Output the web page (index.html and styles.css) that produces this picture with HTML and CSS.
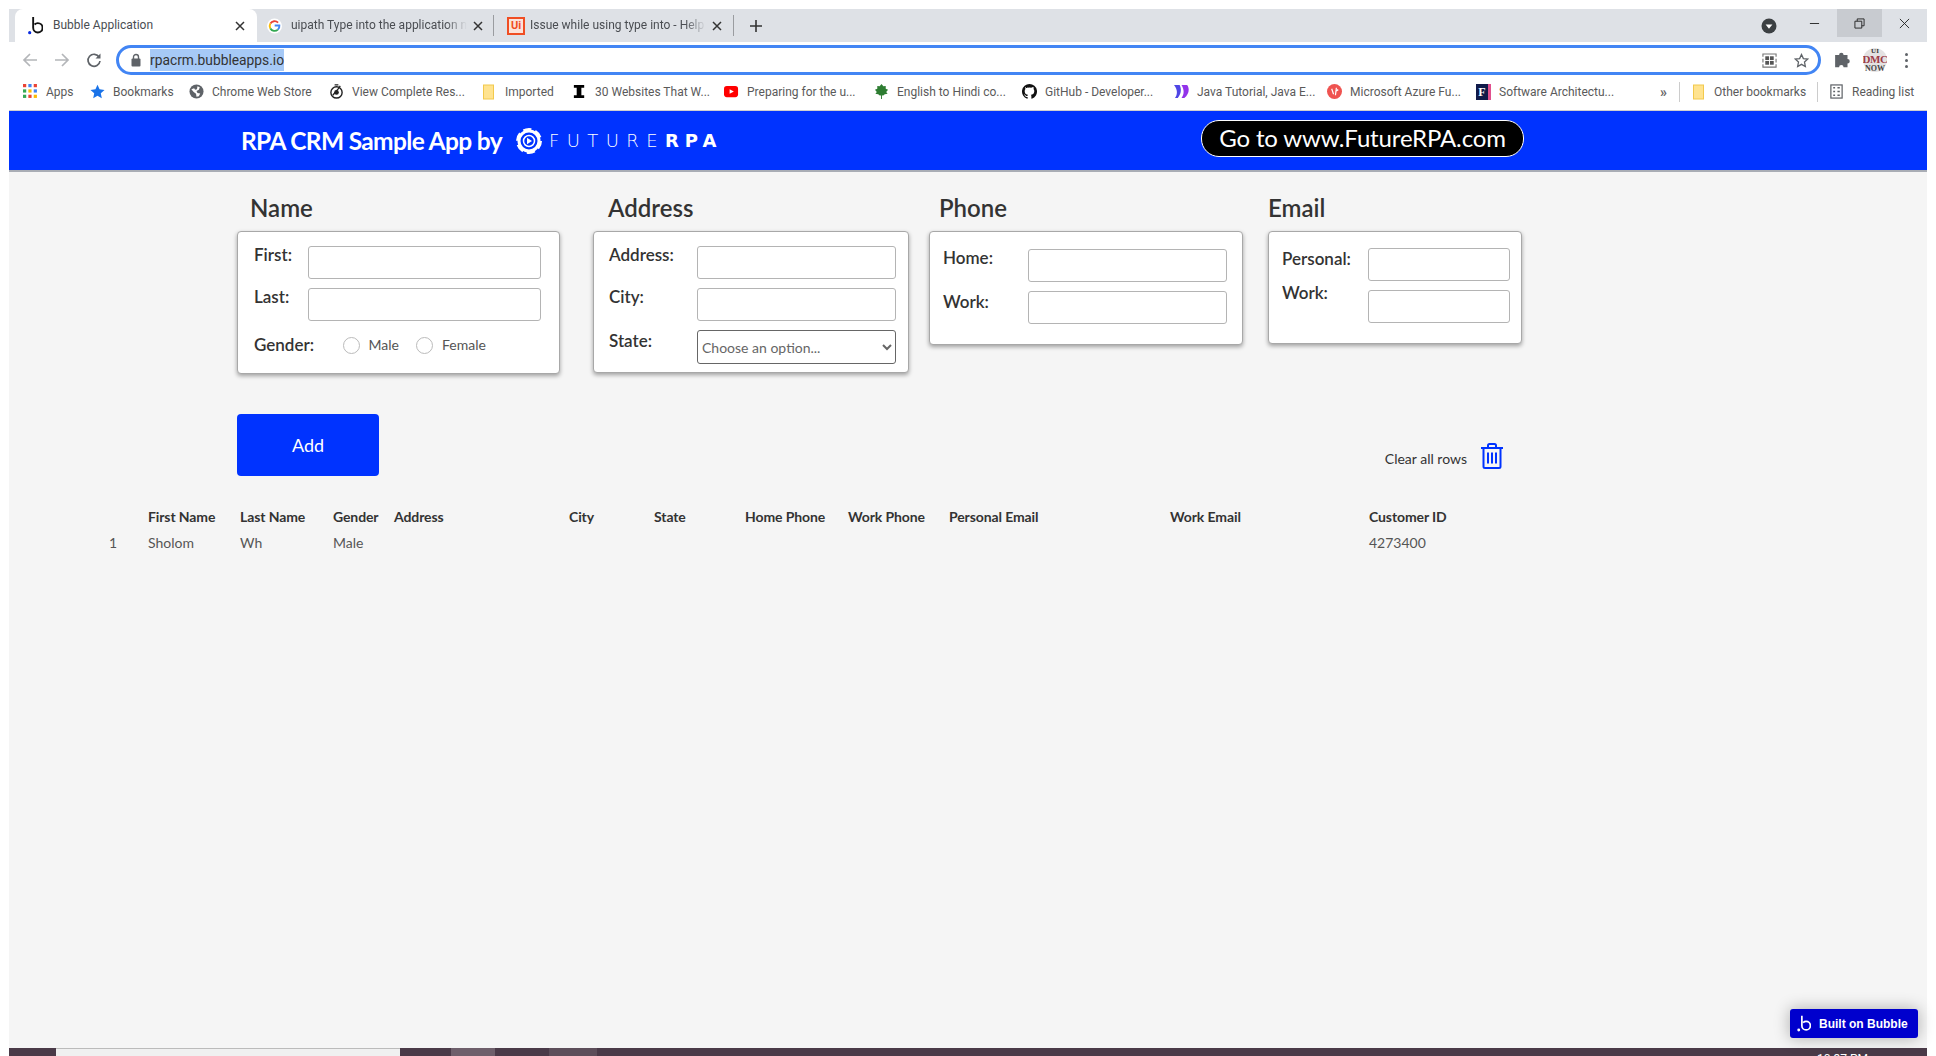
FILE: index.html
```html
<!DOCTYPE html>
<html lang="en">
<head>
  <meta charset="UTF-8" />
  <title>Bubble Application</title>
  <link rel="stylesheet" href="styles.css">
</head>
<body>
<div class="window">
  <div class="tabstrip">
    <div class="tab tab-active">
      <svg class="tab-icon" viewBox="0 0 16 20"><circle cx="1.8" cy="17.6" r="1.7" fill="#0a2be0"/><path d="M5.5 1v11.5a5 5 0 1 0 5-5 5 5 0 0 0-3.5 1.4" fill="none" stroke="#111" stroke-width="2"/></svg>
      <span class="tab-title">Bubble Application</span>
      <svg class="tab-close" viewBox="0 0 10 10"><path d="M1 1l8 8M9 1l-8 8"/></svg>
    </div>
    <div class="tab tab-google">
      <svg class="tab-icon" viewBox="0 0 16 16"><circle cx="8" cy="8" r="8" fill="#fff"/><path d="M11.8 4.4A5.2 5.2 0 0 0 3.6 5.4" fill="none" stroke="#ea4335" stroke-width="2"/><path d="M3.6 5.4a5.2 5.2 0 0 0 0 5.2" fill="none" stroke="#fbbc05" stroke-width="2"/><path d="M3.6 10.6a5.2 5.2 0 0 0 8 1.3" fill="none" stroke="#34a853" stroke-width="2"/><path d="M11.6 11.9A5.2 5.2 0 0 0 13.2 7.4H8.2" fill="none" stroke="#4285f4" stroke-width="2"/></svg>
      <span class="tab-title tab-fade">uipath Type into the application not working</span>
      <svg class="tab-close" viewBox="0 0 10 10"><path d="M1 1l8 8M9 1l-8 8"/></svg>
    </div>
    <div class="tab tab-uipath">
      <span class="ui-icon">Ui</span>
      <span class="tab-title tab-fade">Issue while using type into - Help - UiPath</span>
      <svg class="tab-close" viewBox="0 0 10 10"><path d="M1 1l8 8M9 1l-8 8"/></svg>
    </div>
    <svg class="new-tab" viewBox="0 0 12 12"><path d="M6 0v12M0 6h12"/></svg>
    <div class="strip-space"></div>
    <div class="profile-dot"><svg viewBox="0 0 16 16"><circle cx="8" cy="8" r="7.5" fill="#3c4043"/><path d="M4.6 6.4h6.8L8 10.8z" fill="#fff"/></svg></div>
    <div class="win-btn"><svg viewBox="0 0 12 12"><path d="M1 6h10"/></svg></div>
    <div class="win-btn win-restore"><svg viewBox="0 0 12 12"><path d="M1 3.5h7.5V11H1zM3.5 3.5V1H11v7.5H8.5"/></svg></div>
    <div class="win-btn"><svg viewBox="0 0 12 12"><path d="M1 1l10 10M11 1L1 11"/></svg></div>
  </div>

  <div class="toolbar">
    <div class="tool-btn"><svg viewBox="0 0 16 16"><path class="off" d="M15 8H2M8 2L2 8l6 6"/></svg></div>
    <div class="tool-btn"><svg viewBox="0 0 16 16"><path class="off" d="M1 8h13M8 2l6 6-6 6"/></svg></div>
    <div class="tool-btn"><svg viewBox="0 0 16 16"><path class="on" d="M13.2 5.2A6 6 0 1 0 14 9"/><path d="M14.5 1.5v5h-5z" fill="#5f6368"/></svg></div>
    <div class="omnibox">
      <svg class="lock" viewBox="0 0 10 14"><path d="M2.5 6V4a2.5 2.5 0 0 1 5 0v2" fill="none" stroke="#5f6368" stroke-width="1.4"/><rect x="0.5" y="5.5" width="9" height="8" rx="1" fill="#5f6368"/></svg>
      <span class="url">rpacrm.bubbleapps.io</span>
      <div class="omni-space"></div>
      <svg class="omni-icon" viewBox="0 0 16 16"><path d="M1 4V1h14v3M1 12v3h14v-3M1 6v4M15 6v4" fill="none" stroke="#777" stroke-width="1.2"/><rect x="3.5" y="3.5" width="4" height="4" fill="#555"/><rect x="8.5" y="3.5" width="4" height="4" fill="#555"/><rect x="3.5" y="8.5" width="4" height="4" fill="#555"/><rect x="8.5" y="8.5" width="4" height="4" fill="#555"/></svg>
      <svg class="omni-icon omni-star" viewBox="0 0 16 16"><path d="M8 1.6l2 4.3 4.7.6-3.5 3.2.9 4.7L8 12.1l-4.1 2.3.9-4.7L1.300 6.500l4.700-.6z" fill="none" stroke="#5f6368" stroke-width="1.4"/></svg>
    </div>
    <div class="tool-btn ext"><svg class="puzzle" viewBox="0 0 16 16"><path d="M1 5h3.500a2 2 0 1 1 4 0H12v3.500a2 2 0 1 1 0 4V16H8.500a2 2 0 1 0-4 0H1z" transform="translate(0 -1.500)" fill="#5f6368"/></svg></div>
    <div class="tool-btn ext"><svg class="avatar" viewBox="0 0 24 24"><circle cx="12" cy="12" r="12" fill="#e4e2e2"/><text x="12" y="5" class="av-top">UI</text><text x="12" y="15" class="av-mid">DMC</text><text x="12" y="22.500" class="av-low">NOW</text></svg></div>
    <div class="tool-btn kebab"><span></span><span></span><span></span></div>
  </div>

  <div class="bookmarks">
    <div class="bm"><span class="bm-icon"><svg viewBox="0 0 14 14"><rect width="3" height="3" x="0" y="0" fill="#ea4335"/><rect width="3" height="3" x="5" y="0" fill="#4285f4"/><rect width="3" height="3" x="10" y="0" fill="#ea4335"/><rect width="3" height="3" x="0" y="5" fill="#34a853"/><rect width="3" height="3" x="5" y="5" fill="#fbbc05"/><rect width="3" height="3" x="10" y="5" fill="#4285f4"/><rect width="3" height="3" x="0" y="10" fill="#34a853"/><rect width="3" height="3" x="5" y="10" fill="#ea4335"/><rect width="3" height="3" x="10" y="10" fill="#fbbc05"/></svg></span>Apps</div>
    <div class="bm"><span class="bm-icon"><svg viewBox="0 0 16 16"><path d="M8 .8l2.200 4.900 5.300.6-4 3.600 1.100 5.300L8 12.500l-4.600 2.700 1.100-5.300-4-3.600 5.300-.6z" fill="#1a73e8"/></svg></span>Bookmarks</div>
    <div class="bm"><span class="bm-icon"><svg viewBox="0 0 16 16"><circle cx="8" cy="8" r="7.500" fill="#5f6368"/><path d="M2.500 5.500l3-1 1 1.500 2-.5.500-3 2.500 1-1 2.500-2.500 1.500 1 2 3 .5-1.500 3-2.500.5-.5-3-2.500-2z" fill="#fff"/></svg></span>Chrome Web Store</div>
    <div class="bm"><span class="bm-icon"><svg viewBox="0 0 16 16"><circle cx="8" cy="9" r="6" fill="none" stroke="#222" stroke-width="1.500"/><path d="M4 12l6-7 2-3M6 1h4" stroke="#222" stroke-width="1.400" fill="none"/><circle cx="8" cy="9" r="2.500" fill="#222"/></svg></span>View Complete Res...</div>
    <div class="bm"><span class="bm-icon"><svg viewBox="0 0 14 16" class="folder"><rect x="1" y="1" width="10" height="14" fill="#ffe38f" stroke="#f2c94c"/></svg></span>Imported</div>
    <div class="bm"><span class="bm-icon"><svg viewBox="0 0 14 16"><path d="M1 1h11v3H9v8h3v3H1v-3h3V4H1z" fill="#000"/></svg></span>30 Websites That W...</div>
    <div class="bm"><span class="bm-icon"><svg viewBox="0 0 16 16"><rect y="2" width="15" height="12" rx="3" fill="#f00"/><path d="M6 5.500v5l4.500-2.500z" fill="#fff"/></svg></span>Preparing for the u...</div>
    <div class="bm"><span class="bm-icon"><svg viewBox="0 0 16 16"><path d="M8 0l2 2.500 2.500-.5v3l2.500 1-2 2.500 1.500 2-3 .5-2 1.500-1.500-1-1.500 1-2-1.500-3-.5L3 8.500 1 6l2.500-1V2L6 2.500z" fill="#2e7d32"/><path d="M7.500 10h1v6h-1z" fill="#2e7d32"/></svg></span>English to Hindi co...</div>
    <div class="bm"><span class="bm-icon"><svg viewBox="0 0 16 16"><path d="M8 0a8 8 0 0 0-2.500 15.600c.4.100.5-.2.500-.4v-1.400c-2.200.5-2.700-1-2.700-1-.4-.9-.9-1.200-.9-1.200-.7-.5.100-.5.100-.5.800.1 1.200.8 1.200.8.700 1.200 1.900.9 2.300.7.100-.5.300-.9.500-1.100-1.800-.2-3.600-.9-3.600-4 0-.9.300-1.600.8-2.100-.1-.2-.4-1 .1-2.100 0 0 .7-.2 2.200.8a7.500 7.500 0 0 1 4 0c1.500-1 2.200-.8 2.200-.8.400 1.100.2 1.900.1 2.100.5.600.8 1.300.8 2.100 0 3.100-1.900 3.800-3.700 4 .3.300.6.800.6 1.500v2.200c0 .2.100.5.500.4A8 8 0 0 0 8 0z" fill="#111"/></svg></span>GitHub - Developer...</div>
    <div class="bm"><span class="bm-icon"><svg viewBox="0 0 16 16"><path d="M0 1h6c2 4 2 9-2 14H1c3-4 3-9-1-14z" fill="#4f46e5"/><path d="M8 1h6c3 4 2 10-3 14H8c3-4 3-9 0-14z" fill="#9333ea"/></svg></span>Java Tutorial, Java E...</div>
    <div class="bm"><span class="bm-icon"><svg viewBox="0 0 16 16"><circle cx="8" cy="8" r="8" fill="#ef5350"/><path d="M5 5l2 6M10 4l-1 8M12 6l-3 2" stroke="#fff" stroke-width="1.300" fill="none"/></svg></span>Microsoft Azure Fu...</div>
    <div class="bm"><span class="bm-icon"><span class="f-icon">F</span></span>Software Architectu...</div>
    <div class="bm bm-more">»</div>
    <div class="bm-sep"></div>
    <div class="bm"><span class="bm-icon bm-icon-tight"><svg viewBox="0 0 14 16" class="folder"><rect x="1" y="1" width="10" height="14" fill="#ffe38f" stroke="#f2c94c"/></svg></span>Other bookmarks</div>
    <div class="bm-sep"></div>
    <div class="bm"><span class="bm-icon"><svg viewBox="0 0 14 16"><rect x="1" y="1" width="12" height="14" fill="none" stroke="#5f6368" stroke-width="1.300"/><path d="M3.500 4h2M8 4h2.500M3.500 8h2M8 8h2.500M3.500 12h2M8 12h2.500" stroke="#5f6368" stroke-width="1.500"/></svg></span>Reading list</div>
  </div>

  <header class="banner">
    <div class="brand">RPA CRM Sample App by</div>
    <div class="logo">
      <svg class="logo-mark" viewBox="0 0 26 26">
        <circle cx="13" cy="13" r="10" fill="none" stroke="#fff" stroke-width="3"/>
        <circle cx="13" cy="13" r="11.500" fill="none" stroke="#fff" stroke-width="3" stroke-dasharray="8 4.040"/>
        <circle cx="13" cy="13" r="5.500" fill="none" stroke="#fff" stroke-width="1.500"/>
        <path d="M11 9.800v6.400l5-3.200z" fill="#fff"/>
      </svg>
      <span class="logo-thin">FUTURE</span><span class="logo-bold">RPA</span>
    </div>
    <a class="go-btn">Go to www.FutureRPA.com</a>
  </header>

  <main class="page">
    <div class="form-row">
      <section class="group group-name">
        <h2 class="group-title">Name</h2>
        <div class="card">
          <label class="field-label">First:</label><input class="field" type="text">
          <label class="field-label">Last:</label><input class="field" type="text">
          <div class="gender-row">
            <span class="field-label gender-label">Gender:</span>
            <label class="radio"><input type="radio" name="gender">Male</label>
            <label class="radio"><input type="radio" name="gender">Female</label>
          </div>
        </div>
      </section>
      <section class="group group-address">
        <h2 class="group-title">Address</h2>
        <div class="card">
          <label class="field-label">Address:</label><input class="field" type="text">
          <label class="field-label">City:</label><input class="field" type="text">
          <label class="field-label state-label">State:</label>
          <select class="field select"><option>Choose an option...</option></select>
        </div>
      </section>
      <section class="group group-phone">
        <h2 class="group-title">Phone</h2>
        <div class="card">
          <label class="field-label">Home:</label><input class="field" type="text">
          <label class="field-label state-label">Work:</label><input class="field" type="text">
        </div>
      </section>
      <section class="group group-email">
        <h2 class="group-title">Email</h2>
        <div class="card">
          <label class="field-label state-label">Personal:</label><input class="field" type="text">
          <label class="field-label work-label">Work:</label><input class="field" type="text">
        </div>
      </section>
    </div>

    <div class="action-row">
      <button class="add-btn">Add</button>
      <div class="clear-rows">
        <span>Clear all rows</span>
        <svg class="trash" viewBox="0 0 24 26"><path d="M1 5h22M8 5V2.500Q8 1 9.500 1h5Q16 1 16 2.500V5M3.500 5v18.500Q3.500 25 5 25h14q1.500 0 1.500-1.500V5M8 9.500v11M12 9.500v11M16 9.500v11"/></svg>
      </div>
    </div>

    <div class="rows">
      <div class="row row-head">
        <span></span><span>First Name</span><span>Last Name</span><span>Gender</span><span>Address</span><span>City</span><span>State</span><span>Home Phone</span><span>Work Phone</span><span>Personal Email</span><span>Work Email</span><span>Customer ID</span>
      </div>
      <div class="row">
        <span>1</span><span>Sholom</span><span>Wh</span><span>Male</span><span></span><span></span><span></span><span></span><span></span><span></span><span></span><span>4273400</span>
      </div>
    </div>

    <a class="built-on">
      <svg viewBox="0 0 16 20"><circle cx="1.800" cy="17.600" r="1.700" fill="#fff"/><path d="M5.500 1v11.500a5 5 0 1 0 5-5 5 5 0 0 0-3.500 1.400" fill="none" stroke="#fff" stroke-width="2"/></svg>
      Built on Bubble
    </a>
  </main>

  <footer class="taskbar">
    <span class="task task-start"></span>
    <span class="task task-search"></span>
    <span class="task task-gap"></span>
    <span class="task task-lit"></span>
    <span class="task task-gap2"></span>
    <span class="task task-lit2"></span>
    <span class="clock">10:37 PM</span>
  </footer>
</div>
</body>
</html>
```

FILE: styles.css
```css
* { box-sizing: border-box; }
html, body { height: 100%; }
body {
  margin: 0;
  background: #fff;
  padding: 9px 9px 0;
  font-family: Lato, "Liberation Sans", sans-serif;
  overflow: hidden;
}
.window {
  height: 1047px;
  display: flex;
  flex-direction: column;
}

/* browser chrome */
.tabstrip {
  height: 33px;
  flex: none;
  background: #dee1e6;
  display: flex;
  align-items: center;
  padding-left: 6px;
  font: 12px Roboto, sans-serif;
  color: #4a4d52;
}
.tab {
  height: 33px;
  display: flex;
  align-items: center;
  position: relative;
}
.tab-active {
  width: 242px;
  background: #fff;
  border-radius: 8px 8px 0 0;
  padding: 0 12px 0 13px;
}
.tab-google { width: 237px; padding: 0 10px 0 10px; border-right: 1px solid #9a9ca0; height: 21px; }
.tab-uipath { width: 240px; padding: 0 11px 0 13px; border-right: 1px solid #9a9ca0; height: 21px; }
.tab-icon { width: 15px; height: 16px; flex: none; margin-right: 9px; }
.tab-active .tab-icon { height: 19px; margin-right: 10px; }
.tab-title { flex: 1; white-space: nowrap; overflow: hidden; min-width: 0; padding-bottom: 2px; }
.tab-fade { -webkit-mask-image: linear-gradient(to right, #000 88%, transparent 100%); margin-right: 6px; }
.tab-close { width: 10px; height: 10px; flex: none; fill: none; stroke: #333; stroke-width: 1.5; }
.ui-icon {
  width: 18px;
  height: 18px;
  flex: none;
  margin-right: 5px;
  border: 2px solid #f04e23;
  background: #fbe3da;
  color: #f04e23;
  font: 700 11px/14px Roboto, sans-serif;
  text-align: center;
}
.new-tab { width: 12px; height: 12px; margin-left: 16px; fill: none; stroke: #333; stroke-width: 1.6; flex: none; }
.strip-space { flex: 1; }
.profile-dot { width: 16px; height: 16px; margin-right: 15px; }
.profile-dot svg { display: block; width: 16px; height: 16px; }
.win-btn {
  width: 45px;
  height: 28px;
  align-self: flex-start;
  display: flex;
  align-items: center;
  justify-content: center;
}
.win-btn svg { width: 11px; height: 11px; fill: none; stroke: #222; stroke-width: 1; }
.win-restore { background: #c8cbd0; }

.toolbar {
  height: 36px;
  flex: none;
  background: #fff;
  display: flex;
  align-items: center;
  padding: 0 6px 0 5px;
}
.tool-btn { width: 32px; height: 30px; display: flex; align-items: center; justify-content: center; flex: none; }
.tool-btn svg { width: 16px; height: 16px; fill: none; stroke-width: 1.7; }
.tool-btn .off { stroke: #b4b6b9; }
.tool-btn .on { stroke: #5f6368; }
.omnibox {
  flex: 1;
  height: 30px;
  margin-left: 6px;
  border: 3px solid #4285f4;
  border-radius: 15px;
  display: flex;
  align-items: center;
  padding: 0 9px 0 12px;
}
.lock { width: 10px; height: 14px; flex: none; margin-right: 9px; }
.url {
  background: #a6c9f6;
  font: 13.800px/22px Roboto, sans-serif;
  color: #333;
}
.omni-space { flex: 1; }
.omni-icon { width: 15px; height: 15px; flex: none; }
.omni-star { margin-left: 17px; }
.omnibox + .ext { margin-left: 6px; }
.tool-btn svg.puzzle { width: 18px; height: 18px; }
.tool-btn svg.avatar { width: 24px; height: 24px; }
.avatar text { text-anchor: middle; font-family: "Liberation Serif", serif; font-weight: 700; stroke: none; }
.av-top { font-size: 7px; fill: #333; }
.av-mid { font-size: 11px; fill: #9c3b46; letter-spacing: -.5px; }
.av-low { font-size: 8px; fill: #444; }
.kebab { flex-direction: column; gap: 3px; width: 30px; }
.kebab span { width: 3px; height: 3px; border-radius: 50%; background: #5f6368; }

.bookmarks {
  height: 33px;
  flex: none;
  background: #fff;
  border-bottom: 1px solid #d0d0d0;
  display: grid;
  grid-template-columns: 67px 99px 140px 153px 90px 152px 150px 148px 152px 153px 149px 184px 19px 13px 125px 12px 1fr;
  align-items: center;
  padding: 0 0 5px 14px;
  font: 12px Roboto, sans-serif;
  color: #5a5a5a;
  white-space: nowrap;
}
.bm { display: flex; align-items: center; }
.bm-icon { width: 16px; height: 16px; margin-right: 7px; flex: none; display: flex; align-items: center; }
.bm-icon svg { width: 15px; height: 15px; display: block; }
.bm-icon .folder { height: 16px; }
.bm-icon-tight { margin-right: 6px; }
.f-icon {
  width: 15px;
  height: 16px;
  background: #101a4a;
  border-right: 3px solid #e0508e;
  color: #fff;
  font: 700 12px/16px "Liberation Serif", serif;
  text-align: center;
}
.bm-more { font-size: 14px; font-weight: 700; color: #666; }
.bm-sep { width: 1px; height: 20px; background: #ccc; }

/* app header */
.banner {
  height: 61px;
  flex: none;
  background: #0033ff;
  border-bottom: 2px solid #a9adb5;
  display: flex;
  align-items: center;
  padding-left: 232px;
  color: #fff;
}
.brand { font-size: 24.500px; font-weight: 700; letter-spacing: -.65px; width: 275px; white-space: nowrap; }
.logo { display: flex; align-items: center; width: 685px; }
.logo-mark { width: 26px; height: 26px; margin-right: 7px; }
.logo-thin { font: 200 18px "DejaVu Sans", sans-serif; letter-spacing: 7.400px; }
.logo-bold { font: 700 18px "DejaVu Sans", sans-serif; letter-spacing: 6px; }
.go-btn {
  width: 323px;
  height: 37px;
  margin-top: -4px;
  background: #000;
  border: 1px solid #fff;
  border-radius: 18px;
  font-size: 24px;
  letter-spacing: -.15px;
  line-height: 33px;
  text-align: center;
  white-space: nowrap;
}

/* form */
.page {
  flex: 1;
  background: #f5f5f5;
  position: relative;
  color: #333;
}
.form-row {
  display: flex;
  align-items: flex-start;
  padding: 21px 0 0 228px;
}
.group-title {
  margin: 0 0 8px;
  height: 30px;
  font-size: 24px;
  font-weight: 600;
  line-height: 30px;
}
.card {
  display: grid;
  row-gap: 9px;
  align-items: start;
  align-content: start;
  background: #fff;
  border: 1px solid #a8a8a8;
  border-radius: 4px;
  box-shadow: 0 2px 4px rgba(0, 0, 0, .35);
}
.group-name { width: 323px; margin-right: 33px; }
.group-address { width: 316px; margin-right: 20px; }
.group-phone { width: 314px; margin-right: 25px; }
.group-email { width: 254px; }
.group-name .group-title { padding-left: 13px; }
.group-address .group-title { padding-left: 15px; }
.group-phone .group-title { padding-left: 10px; }
.group-name .card { height: 143px; padding: 14px 0 0 16px; grid-template-columns: 54px 233px; }
.group-address .card { height: 142px; padding: 14px 0 0 15px; grid-template-columns: 88px 199px; }
.group-phone .card { height: 114px; padding: 17px 0 0 13px; grid-template-columns: 85px 199px; }
.group-email .card { height: 113px; margin-top: 2px; padding: 16px 0 0 13px; grid-template-columns: 86px 142px; }
.field-label {
  font-size: 17px;
  font-weight: 600;
  line-height: 18px;
  color: #333;
  white-space: nowrap;
}
.state-label { margin-top: 2px; }
.work-label { margin-top: 3px; transform: translateY(-9px); }
.field {
  height: 33px;
  width: 100%;
  background: #fff;
  border: 1px solid #b4b4b4;
  border-radius: 3px;
}
.select {
  height: 34px;
  border-color: #666;
  font: 14px Lato, sans-serif;
  color: #666;
  padding-left: 0;
}
.gender-row {
  grid-column: 1 / -1;
  display: flex;
  align-items: center;
  margin-top: 6px;
}
.gender-label { width: 88.500px; }
.radio {
  display: flex;
  align-items: center;
  font-size: 14px;
  line-height: 18px;
  color: #555;
  margin-right: 17px;
}
.radio input {
  appearance: none;
  width: 17px;
  height: 17px;
  margin: 0 9px 0 0;
  background: #fff;
  border: 1px solid #bbb;
  border-radius: 50%;
}

.action-row {
  width: 1495px;
  height: 62px;
  margin-top: 40px;
  padding-left: 228px;
  display: flex;
  justify-content: space-between;
  align-items: flex-end;
}
.add-btn {
  width: 142px;
  height: 62px;
  background: #0033ff;
  color: #fff;
  border: none;
  border-radius: 4px;
  font: 18px Lato, sans-serif;
}
.clear-rows {
  display: flex;
  align-items: flex-end;
  gap: 13px;
  margin-bottom: 7px;
  font-size: 14px;
  line-height: 17px;
  color: #333;
}
.clear-rows span { margin-bottom: 2px; }
.trash { width: 24px; height: 26px; fill: none; stroke: #0033ff; stroke-width: 2; display: block; }

.rows { margin-top: 32px; padding-left: 100px; display: grid; row-gap: 8px; }
.row {
  display: grid;
  grid-template-columns: 39px 92px 93px 61px 175px 85px 91px 103px 101px 221px 199px 120px;
  font-size: 14px;
  line-height: 18px;
  color: #555;
}
.row-head { color: #333; font-weight: 700; letter-spacing: -.1px; white-space: nowrap; }

.built-on {
  position: absolute;
  right: 9px;
  bottom: 10px;
  width: 128px;
  height: 29px;
  background: #0000cd;
  border-radius: 3px;
  box-shadow: 0 0 16px rgba(0, 0, 0, .3);
  display: flex;
  align-items: center;
  padding-left: 7px;
  gap: 8px;
  font: 700 12px "Liberation Sans", sans-serif;
  color: #fff;
  white-space: nowrap;
}
.built-on svg { width: 14px; height: 17px; flex: none; }

/* cut off at the bottom of the screen */
.taskbar {
  height: 8px;
  flex: none;
  background: #4a3a48;
  display: flex;
  overflow: hidden;
}
.task { height: 8px; flex: none; }
.task-start { width: 47px; }
.task-search { width: 344px; background: #f0f0f0; border-top: 1px solid #bbb; }
.task-gap { width: 51px; }
.task-lit { width: 44px; background: #6e5f6b; }
.task-gap2 { width: 54px; }
.task-lit2 { width: 48px; background: #5d4e5a; }
.clock {
  margin-left: auto;
  margin-right: 59px;
  padding-top: 4px;
  font: 12px/14px Roboto, sans-serif;
  color: #fff;
}
```
